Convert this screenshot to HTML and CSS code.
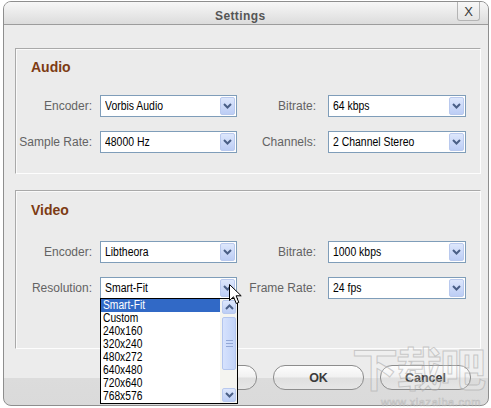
FILE: index.html
```html
<!DOCTYPE html>
<html>
<head>
<meta charset="utf-8">
<link rel="stylesheet" href="styles.css">
</head>
<body>
<div class="window">
  <div class="titlebar">
    <span class="title">Settings</span>
    <span class="close">X</span>
  </div>
  <div class="content">
    <section class="group group-audio">
      <h2 class="group-title">Audio</h2>
      <div class="rows">
        <div class="row">
          <span class="lbl">Encoder:</span>
          <div class="select"><span class="val">Vorbis Audio</span><span class="arrow"><svg width="9" height="6" viewBox="0 0 9 6"><polyline points="1,1 4.5,4.5 8,1" fill="none" stroke="#4a5f86" stroke-width="2"/></svg></span></div>
          <span class="lbl lbl-r">Bitrate:</span>
          <div class="select"><span class="val">64 kbps</span><span class="arrow"><svg width="9" height="6" viewBox="0 0 9 6"><polyline points="1,1 4.5,4.5 8,1" fill="none" stroke="#4a5f86" stroke-width="2"/></svg></span></div>
        </div>
        <div class="row">
          <span class="lbl">Sample Rate:</span>
          <div class="select"><span class="val">48000 Hz</span><span class="arrow"><svg width="9" height="6" viewBox="0 0 9 6"><polyline points="1,1 4.5,4.5 8,1" fill="none" stroke="#4a5f86" stroke-width="2"/></svg></span></div>
          <span class="lbl lbl-r">Channels:</span>
          <div class="select"><span class="val">2 Channel Stereo</span><span class="arrow"><svg width="9" height="6" viewBox="0 0 9 6"><polyline points="1,1 4.5,4.5 8,1" fill="none" stroke="#4a5f86" stroke-width="2"/></svg></span></div>
        </div>
      </div>
    </section>
    <section class="group group-video">
      <h2 class="group-title">Video</h2>
      <div class="rows">
        <div class="row">
          <span class="lbl">Encoder:</span>
          <div class="select"><span class="val">Libtheora</span><span class="arrow"><svg width="9" height="6" viewBox="0 0 9 6"><polyline points="1,1 4.5,4.5 8,1" fill="none" stroke="#4a5f86" stroke-width="2"/></svg></span></div>
          <span class="lbl lbl-r">Bitrate:</span>
          <div class="select"><span class="val">1000 kbps</span><span class="arrow"><svg width="9" height="6" viewBox="0 0 9 6"><polyline points="1,1 4.5,4.5 8,1" fill="none" stroke="#4a5f86" stroke-width="2"/></svg></span></div>
        </div>
        <div class="row">
          <span class="lbl">Resolution:</span>
          <div class="select">
            <span class="val">Smart-Fit</span><span class="arrow"><svg width="9" height="6" viewBox="0 0 9 6"><polyline points="1,1 4.5,4.5 8,1" fill="none" stroke="#4a5f86" stroke-width="2"/></svg></span>
            <div class="dropdown">
              <ul class="items">
                <li class="item sel"><span class="itext">Smart-Fit</span></li>
                <li class="item"><span class="itext">Custom</span></li>
                <li class="item"><span class="itext">240x160</span></li>
                <li class="item"><span class="itext">320x240</span></li>
                <li class="item"><span class="itext">480x272</span></li>
                <li class="item"><span class="itext">640x480</span></li>
                <li class="item"><span class="itext">720x640</span></li>
                <li class="item"><span class="itext">768x576</span></li>
              </ul>
              <div class="scrollbar">
                <span class="sbtn"><svg width="9" height="6" viewBox="0 0 9 6"><polyline points="1,5 4.5,1.5 8,5" fill="none" stroke="#4a5f86" stroke-width="2"/></svg></span>
                <div class="track">
                  <div class="thumb"><svg width="7" height="7" viewBox="0 0 7 7"><path d="M0 0.5H7M0 3.5H7M0 6.5H7" stroke="#93a8d6" stroke-width="1"/></svg></div>
                </div>
                <span class="sbtn"><svg width="9" height="6" viewBox="0 0 9 6"><polyline points="1,1 4.5,4.5 8,1" fill="none" stroke="#4a5f86" stroke-width="2"/></svg></span>
              </div>
            </div>
          </div>
          <span class="lbl lbl-r">Frame Rate:</span>
          <div class="select"><span class="val">24 fps</span><span class="arrow"><svg width="9" height="6" viewBox="0 0 9 6"><polyline points="1,1 4.5,4.5 8,1" fill="none" stroke="#4a5f86" stroke-width="2"/></svg></span></div>
        </div>
      </div>
    </section>
    <div class="buttons">
      <button class="btn"></button>
      <button class="btn">OK</button>
      <button class="btn">Cancel</button>
    </div>
  </div>
</div>
<div class="watermark">下载吧</div>
<div class="watermark-url">www.xiazaiba.com</div>
<svg class="cursor" width="14" height="22" viewBox="0 0 14 22"><path d="M0.5 0.5 L0.5 16.5 L4.5 12.8 L7.3 19.5 L9.8 18.4 L7.1 11.8 L12.2 11.8 Z" fill="#fff" stroke="#000" stroke-width="1" stroke-linejoin="round"/></svg>
</body>
</html>
```
FILE: styles.css
```css
* { box-sizing: border-box; }
body {
  margin: 0;
  background: #fff;
  font-family: "Liberation Sans", Arial, sans-serif;
  position: relative;
  width: 491px;
  height: 408px;
  overflow: hidden;
}
.window {
  margin: 1px 0 0 3px;
  width: 486px;
  height: 405px;
  border: 1px solid #8e8e8e;
  border-radius: 8px;
  background: linear-gradient(#ececec 0, #ececec 376px, #dcdcdc 376px, #dadada 100%);
}
.titlebar {
  height: 23px;
  border-bottom: 1px solid #9c9c9c;
  border-radius: 7px 7px 0 0;
  background: linear-gradient(#f7f7f7, #dcdcdc);
  display: flex;
  align-items: flex-start;
  padding-left: 211px;
}
.title {
  margin-top: 7px;
  font-size: 12px;
  line-height: 14px;
  font-weight: bold;
  letter-spacing: 0.4px;
  color: #555;
}
.close {
  margin-left: auto;
  margin-right: 8px;
  width: 23px;
  height: 19px;
  border: 1px solid #b4b4b4;
  border-top: none;
  border-radius: 0 0 3px 3px;
  background: linear-gradient(#f8f8f8, #e4e4e4);
  font-size: 13px;
  line-height: 19px;
  text-align: center;
  color: #3a3a3a;
}
.content {
  padding: 23px 7px 0 11px;
}
.group {
  width: 466px;
  border: 1px solid;
  border-color: #a9a9a9 #fdfdfd #fdfdfd #a9a9a9;
  box-shadow: inset 1px 1px 0 #fafafa;
  background: #ebebeb;
}
.group-audio { height: 126px; padding-top: 10px; }
.group-video { height: 159px; padding-top: 11px; margin-top: 16px; }
.group-title {
  margin: 0;
  padding-left: 15px;
  font-size: 14px;
  line-height: 16px;
  font-weight: bold;
  color: #7d3b14;
}
.group-audio .group-title { margin-bottom: 20px; }
.group-video .group-title { margin-bottom: 23px; }
.rows {
  display: flex;
  flex-direction: column;
  gap: 14px;
}
.row {
  display: grid;
  grid-template-columns: 84px 137px 91px 138px;
  align-items: center;
  height: 22px;
}
.lbl {
  text-align: right;
  padding-right: 8px;
  font-size: 12px;
  color: #636363;
  white-space: nowrap;
}
.lbl-r { padding-right: 12px; }
.select {
  position: relative;
  display: flex;
  align-items: center;
  height: 22px;
  border: 1px solid #7f9db9;
  background: #fff;
  padding: 0 1px 0 4px;
}
.val {
  flex: 1;
  font-size: 12.5px;
  color: #000;
  white-space: nowrap;
  transform: scaleX(0.835);
  transform-origin: left center;
}
.arrow, .sbtn {
  display: flex;
  align-items: center;
  justify-content: center;
  width: 15px;
  height: 18px;
  border: 1px solid #b9c9ee;
  border-radius: 2px;
  background: linear-gradient(#dde7fc, #bccdf5);
}
.dropdown {
  position: absolute;
  left: -1px;
  top: 100%;
  width: 138px;
  height: 106px;
  border: 1px solid #000;
  background: #fff;
  display: flex;
  z-index: 5;
}
.items {
  list-style: none;
  margin: 0;
  padding: 0;
  flex: 1;
}
.item {
  height: 13px;
  line-height: 13px;
  padding-left: 2px;
  font-size: 12.5px;
  color: #000;
  white-space: nowrap;
}
.itext {
  display: inline-block;
  transform: scaleX(0.82);
  transform-origin: left center;
}
.item.sel {
  background: #3169c6;
  color: #fff;
}
.scrollbar {
  width: 17px;
  display: flex;
  flex-direction: column;
  padding: 1px 1px 1px 2px;
  background: #f4f4f0;
}
.sbtn {
  width: 14px;
  height: 14px;
}
.track {
  flex: 1;
  padding-top: 3px;
}
.thumb {
  height: 53px;
  border: 1px solid #b3c5ee;
  border-radius: 2px;
  background: linear-gradient(to right, #d6e2fd, #c2d3f8);
  display: flex;
  align-items: center;
  justify-content: center;
}
.buttons {
  display: flex;
  justify-content: flex-end;
  gap: 16px;
  margin-top: 16px;
  padding-right: 10px;
}
.btn {
  width: 91px;
  height: 25px;
  border: 1px solid #8d8d8d;
  border-radius: 12px;
  background: linear-gradient(#fdfdfd 0%, #f1f1f1 48%, #dfdfdf 52%, #e6e6e6 100%);
  font-family: "Liberation Sans", Arial, sans-serif;
  font-size: 12.5px;
  font-weight: bold;
  color: #3b3b3b;
  padding: 0;
}
.watermark {
  position: absolute;
  left: 352px;
  top: 336px;
  font-family: "Noto Sans CJK SC", sans-serif;
  font-size: 46px;
  line-height: 60px;
  font-weight: bold;
  letter-spacing: -2px;
  color: rgba(255, 255, 255, 0.2);
  -webkit-text-stroke: 1px rgba(160, 160, 160, 0.5);
  pointer-events: none;
}
.watermark-url {
  position: absolute;
  left: 381px;
  top: 397px;
  font-family: "Liberation Sans", sans-serif;
  font-size: 11px;
  line-height: 11px;
  letter-spacing: 0.6px;
  color: rgba(255, 255, 255, 0.3);
  -webkit-text-stroke: 0.6px rgba(160, 160, 160, 0.55);
}
.cursor {
  position: absolute;
  left: 229px;
  top: 284px;
  z-index: 10;
}
```
